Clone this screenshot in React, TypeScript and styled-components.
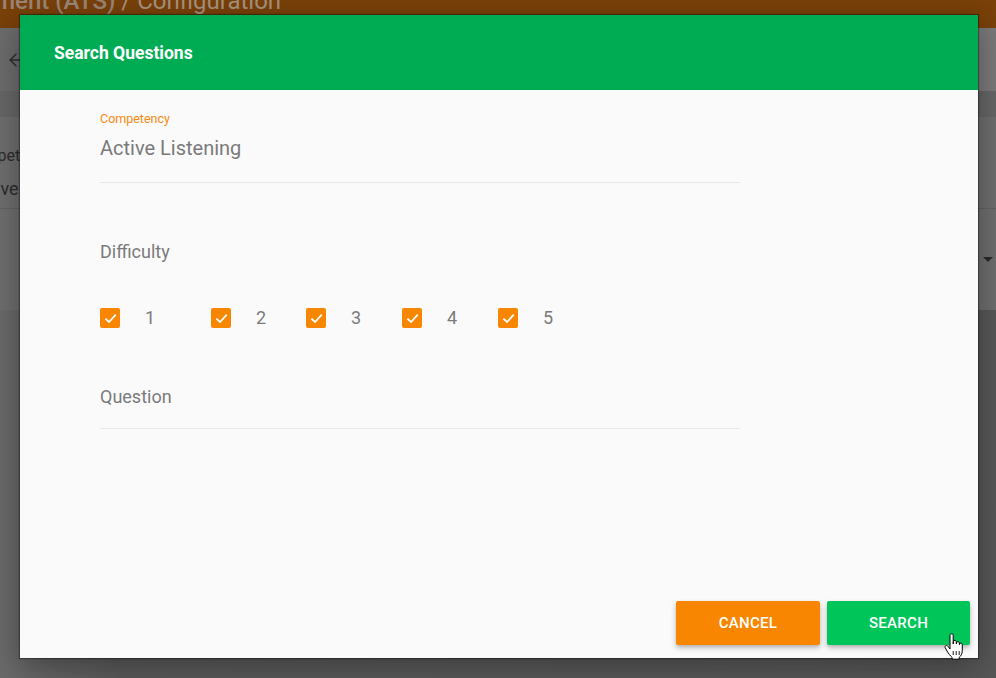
import React from "react";
import styled, { createGlobalStyle } from "styled-components";
import { ArrowLeft } from "lucide-react";

const GlobalStyle = createGlobalStyle`
  html, body {
    margin: 0;
    padding: 0;
    height: 100%;
    overflow: hidden;
  }
  body {
    font-family: Roboto, "Liberation Sans", Arial, sans-serif;
    background: #5a5a5a;
  }
`;

const Page = styled.div`
  width: 996px;
  height: 678px;
  display: flex;
  flex-direction: column;
  background: linear-gradient(90deg, #6a6a6a 0%, #5a5a5a 12%, #575757 100%);
  overflow: hidden;
  position: relative;
`;

const TopBar = styled.div`
  height: 28px;
  flex-shrink: 0;
  background: #7a4109;
  overflow: hidden;
  display: flex;
  align-items: flex-end;
`;

const TopTitle = styled.div`
  margin-left: -84px;
  margin-bottom: 15px;
  font-size: 24px;
  line-height: 24px;
  font-weight: 500;
  color: #9a8676;
  white-space: nowrap;
  span {
    font-weight: 400;
    color: #a8927f;
  }
`;

const Toolbar = styled.div`
  height: 63px;
  flex-shrink: 0;
  background: linear-gradient(90deg, #6c6c6c, #777 60%, #7a7a7a);
  border-bottom: 1px solid #666;
  display: flex;
  align-items: center;
  padding-left: 6px;
  color: #2e2e2e;
`;

const Strip = styled.div`
  height: 25px;
  flex-shrink: 0;
  background: #666;
`;

const Card = styled.div`
  height: 193px;
  flex-shrink: 0;
  background: #6e6e6e;
  display: flex;
  flex-direction: column;
`;

const CardField = styled.div`
  height: 92px;
  box-sizing: border-box;
  padding-top: 30px;
  border-bottom: 1px solid #626262;
  display: flex;
  flex-direction: column;
  gap: 13px;
  color: #2c2c2c;
`;

const CardLabel = styled.div`
  margin-left: -36px;
  font-size: 16px;
  line-height: 18px;
`;

const CardValue = styled.div`
  margin-left: -31px;
  font-size: 18px;
  line-height: 22px;
`;

const CardRow = styled.div`
  flex: 1;
  display: flex;
  align-items: center;
  justify-content: flex-end;
  padding-right: 3px;
`;

const Caret = styled.div`
  width: 0;
  height: 0;
  border-left: 5px solid transparent;
  border-right: 5px solid transparent;
  border-top: 5px solid #2a2a2a;
`;

const Overlay = styled.div`
  position: absolute;
  inset: 0;
  padding: 15px 0 0 20px;
  display: flex;
  align-items: flex-start;
`;

const Modal = styled.div`
  width: 958px;
  height: 643px;
  background: #fafafa;
  box-shadow: 0 0 1px 1px rgba(0, 0, 0, 0.35), 0 8px 30px rgba(0, 0, 0, 0.35);
  display: flex;
  flex-direction: column;
`;

const ModalHeader = styled.div`
  height: 75px;
  background: #00ac53;
  display: flex;
  align-items: center;
  padding-left: 34px;
`;

const ModalTitle = styled.h2`
  margin: 0;
  font-size: 17.5px;
  font-weight: 700;
  color: #fff;
`;

const ModalBody = styled.div`
  flex: 1;
  display: flex;
  flex-direction: column;
  padding: 22px 0 0 80px;
`;

const Field = styled.div<{ $pad: number }>`
  width: 640px;
  padding-bottom: ${(p) => p.$pad}px;
  border-bottom: 1px solid #e8e8e8;
`;

const FloatLabel = styled.div`
  font-size: 12.5px;
  line-height: 14px;
  color: #f7890f;
`;

const FieldValue = styled.div`
  margin-top: 10px;
  font-size: 20px;
  line-height: 24px;
  color: #7a7a7a;
`;

const SectionLabel = styled.div<{ $top: number }>`
  margin-top: ${(p) => p.$top}px;
  font-size: 18px;
  line-height: 22px;
  color: #7a7a7a;
`;

const CheckRow = styled.div`
  margin-top: 45px;
  display: grid;
  grid-template-columns: 111px 95px 96px 96px auto;
`;

const CheckItem = styled.label`
  display: flex;
  align-items: center;
  gap: 25px;
  font-size: 18px;
  line-height: 20px;
  color: #7a7a7a;
`;

const Box = styled.span`
  width: 20px;
  height: 20px;
  border-radius: 2px;
  background: #f88600;
  display: flex;
  align-items: center;
  justify-content: center;
`;

const Footer = styled.div`
  display: flex;
  justify-content: flex-end;
  gap: 7px;
  padding: 0 8px 13px 0;
`;

const ActionButton = styled.button<{ $color: string; $w: number }>`
  width: ${(p) => p.$w}px;
  height: 44px;
  border: none;
  border-radius: 2px;
  background: ${(p) => p.$color};
  color: #fff;
  font-family: Roboto, "Liberation Sans", Arial, sans-serif;
  font-size: 15px;
  font-weight: 500;
  letter-spacing: 0.3px;
  box-shadow: 0 3px 6px rgba(0, 0, 0, 0.2), 0 2px 3px rgba(0, 0, 0, 0.12);
  cursor: pointer;
`;

const Cursor = styled.svg`
  position: absolute;
  left: 944px;
  top: 633px;
`;

const levels = ["1", "2", "3", "4", "5"];

function Check() {
  return (
    <svg width="13" height="11" viewBox="0 0 13 11">
      <path d="M1.4 5.6 L5 9 L11.8 1.7" fill="none" stroke="#fff" strokeWidth="1.8" />
    </svg>
  );
}

export default function App() {
  return (
    <>
      <GlobalStyle />
      <Page>
        <TopBar>
          <TopTitle>
            Assessment (ATS) <span>/ Configuration</span>
          </TopTitle>
        </TopBar>
        <Toolbar>
          <ArrowLeft size={20} strokeWidth={1.8} />
        </Toolbar>
        <Strip />
        <Card>
          <CardField>
            <CardLabel>Competency</CardLabel>
            <CardValue>Active Listening</CardValue>
          </CardField>
          <CardRow>
            <Caret />
          </CardRow>
        </Card>

        <Overlay>
          <Modal>
            <ModalHeader>
              <ModalTitle>Search Questions</ModalTitle>
            </ModalHeader>
            <ModalBody>
              <Field $pad={22}>
                <FloatLabel>Competency</FloatLabel>
                <FieldValue>Active Listening</FieldValue>
              </Field>
              <SectionLabel $top={58}>Difficulty</SectionLabel>
              <CheckRow>
                {levels.map((l) => (
                  <CheckItem key={l}>
                    <Box>
                      <Check />
                    </Box>
                    {l}
                  </CheckItem>
                ))}
              </CheckRow>
              <Field $pad={20}>
                <SectionLabel $top={58}>Question</SectionLabel>
              </Field>
            </ModalBody>
            <Footer>
              <ActionButton $color="#f88600" $w={144}>
                CANCEL
              </ActionButton>
              <ActionButton $color="#00c65a" $w={143}>
                SEARCH
              </ActionButton>
            </Footer>
          </Modal>
        </Overlay>

        <Cursor width="20" height="28" viewBox="0 0 20 28">
          <path
            d="M6 2.5c0-1 .7-1.7 1.6-1.7s1.6.7 1.6 1.7V11l.2-2.2c.1-.9.7-1.4 1.5-1.4s1.4.6 1.4 1.5v2l.3-1.2c.2-.8.8-1.2 1.5-1.1.8.1 1.3.7 1.3 1.5v1.6l.3-.7c.3-.7.9-1 1.5-.9.7.2 1.1.8 1.1 1.6v6c0 3.2-1.5 5.5-3.2 6.8v1.7H8.2v-1.6C6.3 23 4.5 20.4 3 18L1.3 14.8c-.5-.9-.2-1.8.5-2.2.8-.4 1.6-.1 2.1.6L6 16V2.5z"
            fill="#fff"
            stroke="#000"
            strokeWidth="1"
            strokeLinejoin="round"
          />
          <path d="M9.2 18v4M12.2 18v4M15.2 18v4" stroke="#000" strokeWidth="0.9" />
        </Cursor>
      </Page>
    </>
  );
}
